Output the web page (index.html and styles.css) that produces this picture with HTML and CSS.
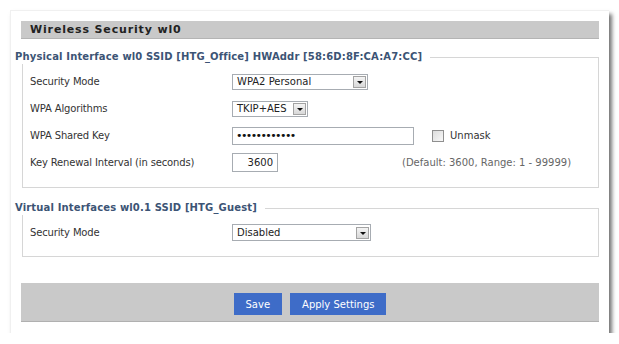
FILE: index.html
```html
<!doctype html>
<html lang="en">
<head>
    <meta charset="utf-8">
    <title>Wireless Security</title>
    <link rel="stylesheet" href="styles.css">
</head>
<body>
    <div id="main-panel">
        <div id="header-panel">Wireless Security wl0</div>

        <fieldset class="group">
            <legend>Physical Interface wl0 SSID [HTG_Office] HWAddr [58:6D:8F:CA:A7:CC]</legend>
            <div class="row">
                <div class="label">Security Mode</div>
                <div class="select wide">
                    <span class="value">WPA2 Personal</span>
                    <span class="arrow"></span>
                </div>
            </div>
            <div class="row">
                <div class="label">WPA Algorithms</div>
                <div class="select short">
                    <span class="value">TKIP+AES</span>
                    <span class="arrow"></span>
                </div>
            </div>
            <div class="row">
                <div class="label">WPA Shared Key</div>
                <div class="field key">&bull;&bull;&bull;&bull;&bull;&bull;&bull;&bull;&bull;&bull;&bull;&bull;</div>
                <div class="check"></div>
                <div class="check-label">Unmask</div>
            </div>
            <div class="row">
                <div class="label">Key Renewal Interval (in seconds)</div>
                <div class="field num">3600</div>
                <div class="hint">(Default: 3600, Range: 1 - 99999)</div>
            </div>
        </fieldset>

        <fieldset class="group second">
            <legend>Virtual Interfaces wl0.1 SSID [HTG_Guest]</legend>
            <div class="row">
                <div class="label">Security Mode</div>
                <div class="select wider">
                    <span class="value">Disabled</span>
                    <span class="arrow"></span>
                </div>
            </div>
        </fieldset>

        <div id="footer-panel">
            <button type="button" class="btn">Save</button>
            <button type="button" class="btn">Apply Settings</button>
        </div>
    </div>
</body>
</html>
```

FILE: styles.css
```css
body {
    margin: 0;
    padding: 0;
    background-color: #fff;
    font-family: 'DejaVu Sans', Verdana, sans-serif;
    font-size: 10px;
    color: #333;
}
#main-panel {
    margin: 10px 0 0 10px;
    width: 578px;
    height: 300px;
    padding: 10px 10px 12px 10px;
    background-color: #fff;
    border: 1px solid #f0f0f0;
    border-width: 1px 0 0 1px;
    box-shadow: 3px 4px 4px rgba(0, 0, 0, 0.55);
}
#header-panel {
    height: 18px;
    line-height: 18px;
    background-color: #c9c9c9;
    border-bottom: 1px solid #b4b4b4;
    box-sizing: border-box;
    padding-left: 9px;
    font-weight: bold;
    font-size: 11px;
    letter-spacing: 0.85px;
    color: #222;
}
.group {
    margin: 11px 0 0 1px;
    padding: 4px 0 11px 7px;
    border: 1px solid #d6d6d6;
    min-width: 0;
}
.group legend {
    margin-left: -15px;
    padding: 0 8px 0 0;
    height: 14px;
    line-height: 14px;
    font-weight: bold;
    font-size: 10px;
    letter-spacing: 0.15px;
    color: #3c5475;
    background-color: #fff;
}
.group.second {
    margin-top: 13px;
    padding-bottom: 10px;
}
.row {
    display: flex;
    align-items: center;
    height: 27px;
}
.label {
    width: 202px;
    flex-shrink: 0;
    letter-spacing: -0.15px;
}
.select {
    display: flex;
    align-items: center;
    justify-content: space-between;
    box-sizing: border-box;
    height: 16px;
    border: 1px solid #a7acb2;
    padding: 0 0 0 4px;
    background-color: #fff;
    color: #222;
}
.select.wide { width: 136px; }
.select.short { width: 76px; }
.select.wider { width: 139px; height: 17px; }
.arrow {
    width: 13px;
    height: 12px;
    margin-right: 1px;
    border: 1px solid #a3a3a3;
    box-sizing: border-box;
    background: linear-gradient(#f4f4f4, #d8d8d8);
    position: relative;
}
.arrow::after {
    content: "";
    position: absolute;
    left: 3px;
    top: 4px;
    border-left: 3px solid transparent;
    border-right: 3px solid transparent;
    border-top: 3px solid #111;
}
.field {
    box-sizing: border-box;
    height: 18px;
    line-height: 16px;
    border: 1px solid #a7acb2;
    background-color: #fff;
    color: #222;
}
.field.key {
    width: 182px;
    padding-left: 3px;
    font-size: 11px;
    letter-spacing: -1.6px;
    color: #111;
}
.field.num {
    width: 46px;
    height: 19px;
    line-height: 17px;
    text-align: right;
    padding-right: 4px;
}
.check {
    width: 12px;
    height: 12px;
    box-sizing: border-box;
    margin-left: 18px;
    border: 1px solid #8f8f8f;
    background: linear-gradient(135deg, #dcdcdc, #f8f8f8);
}
.check-label {
    margin-left: 6px;
}
.hint {
    margin-left: 124px;
    color: #666;
}
#footer-panel {
    display: flex;
    justify-content: center;
    align-items: flex-start;
    gap: 8px;
    margin-top: 26px;
    height: 39px;
    box-sizing: border-box;
    padding-top: 10px;
    background-color: #c9c9c9;
    border-bottom: 1px solid #b0b0b0;
}
.btn {
    height: 22px;
    border: none;
    padding: 0 12px;
    background-color: #3e6cc8;
    color: #fff;
    font-family: 'DejaVu Sans', Verdana, sans-serif;
    font-size: 10px;
}
```
